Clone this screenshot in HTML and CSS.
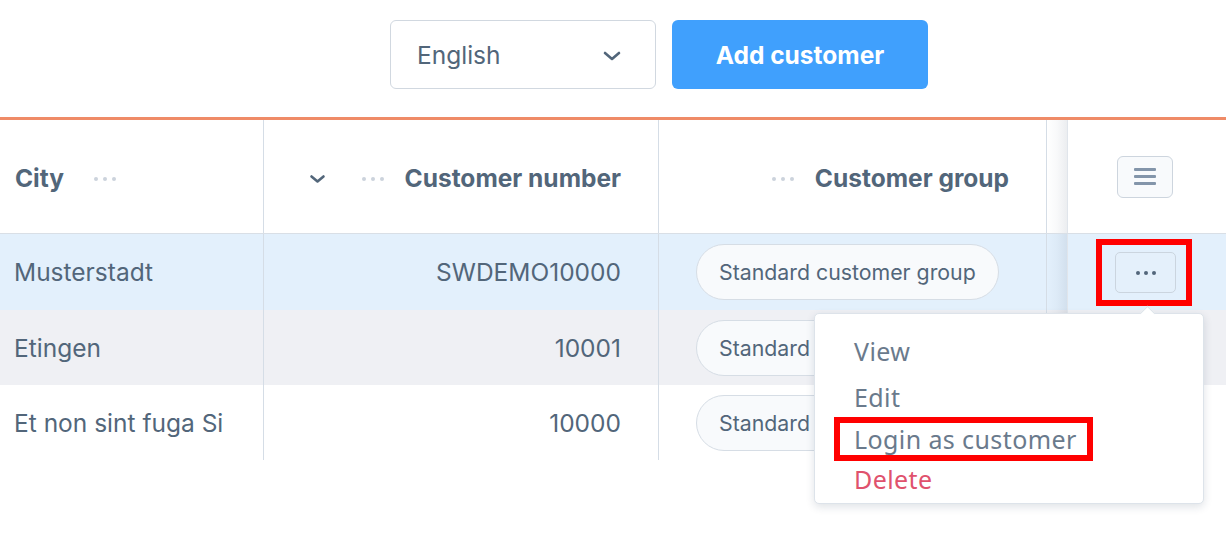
FILE: index.html
```html
<!DOCTYPE html>
<html lang="en">
<head>
<meta charset="utf-8">
<title>Customers</title>
<link rel="stylesheet" href="styles.css">
</head>
<body>
<div class="toolbar">
  <div class="select">
    <span class="select-label">English</span>
    <svg class="select-chevron" width="18" height="10" viewBox="0 0 18 10"><path d="M2 2 L9 8 L16 2" fill="none" stroke="#52667a" stroke-width="2.6" stroke-linecap="round" stroke-linejoin="round"/></svg>
  </div>
  <button class="btn-primary">Add customer</button>
</div>

<div class="grid">
  <div class="row head">
    <div class="cell c-city"><span class="h-label">City</span><span class="h-dots"><i></i><i></i><i></i></span></div>
    <div class="cell c-num">
      <svg class="sort" width="17" height="10" viewBox="0 0 17 10"><path d="M2.5 2.5 L8.5 7.5 L14.5 2.5" fill="none" stroke="#52667a" stroke-width="2.6" stroke-linecap="round" stroke-linejoin="round"/></svg>
      <span class="h-dots"><i></i><i></i><i></i></span><span class="h-label">Customer number</span>
    </div>
    <div class="cell c-group head-right"><span class="h-dots"><i></i><i></i><i></i></span><span class="h-label">Customer group</span></div>
    <div class="spacer"></div>
    <div class="cell c-actions">
      <button class="icon-btn menu-btn"><i></i><i></i><i></i></button>
    </div>
  </div>

  <div class="row r-selected r-first">
    <div class="cell c-city">Musterstadt</div>
    <div class="cell c-num">SWDEMO10000</div>
    <div class="cell c-group"><span class="pill">Standard customer group</span></div>
    <div class="spacer"></div>
    <div class="cell c-actions">
      <span class="mark mark-btn"><button class="icon-btn dots-btn"><i></i><i></i><i></i></button></span>
    </div>
  </div>

  <div class="row r-striped">
    <div class="cell c-city">Etingen</div>
    <div class="cell c-num">10001</div>
    <div class="cell c-group"><span class="pill">Standard customer group</span></div>
    <div class="spacer"></div>
    <div class="cell c-actions"></div>
  </div>

  <div class="row">
    <div class="cell c-city">Et non sint fuga Si</div>
    <div class="cell c-num">10000</div>
    <div class="cell c-group"><span class="pill">Standard customer group</span></div>
    <div class="spacer"></div>
    <div class="cell c-actions"></div>
  </div>

  <div class="context-menu">
    <span class="menu-arrow"></span>
    <div class="menu-item first">View</div>
    <div class="menu-item">Edit</div>
    <div class="menu-item marked"><span class="mark mark-item">Login as customer</span></div>
    <div class="menu-item danger">Delete</div>
  </div>
</div>
</body>
</html>
```

FILE: styles.css
```css
* { box-sizing: border-box; }

body {
  margin: 0;
  background: #ffffff;
  font-family: Inter, "Noto Sans", sans-serif;
  color: #52667a;
  width: 1226px;
  height: 542px;
  overflow: hidden;
}

.toolbar {
  display: flex;
  gap: 16px;
  padding: 20px 0 0 390px;
  height: 89px;
}

.select {
  width: 266px;
  height: 69px;
  border: 1px solid #d1d8e0;
  border-radius: 6px;
  display: flex;
  align-items: center;
  justify-content: space-between;
  padding: 0 34px 0 26px;
  font-size: 24.5px;
  color: #52667a;
}

.select-chevron { margin-top: 2px; }

.btn-primary {
  width: 256px;
  height: 69px;
  border: none;
  border-radius: 6px;
  background: #40a0fd;
  color: #ffffff;
  font-family: Inter, sans-serif;
  font-size: 24.5px;
  font-weight: 700;
  padding: 0;
}

.grid {
  position: relative;
  margin-top: 28px;
  border-top: 3px solid #ef8b67;
}

.row {
  display: grid;
  grid-template-columns: 264px 395px 388px 20px 1fr;
  height: 75px;
  font-size: 24.5px;
}

.row.head {
  height: 114px;
  border-bottom: 1px solid #d9dfe6;
}

.r-first { height: 76px; }
.r-selected { background: #e3f0fc; }
.r-striped { background: #eff0f4; }

.cell {
  display: flex;
  align-items: center;
  border-right: 1px solid #d5dde6;
  min-width: 0;
  white-space: nowrap;
  overflow: hidden;
}

.c-city { padding-left: 14px; }
.c-num { justify-content: flex-end; padding-right: 37px; }
.c-group { padding-left: 37px; }
.head-right { justify-content: flex-end; padding-right: 37px; padding-left: 0; }

.spacer {
  background: linear-gradient(to right, rgba(0,0,0,0) 0%, rgba(40,60,90,0.03) 50%, rgba(40,60,90,0.09) 100%);
}

.c-actions {
  border-right: none;
  border-left: 1px solid #e0e5eb;
  justify-content: center;
  overflow: visible;
}

.head .cell { padding-top: 2px; }
.head .c-city { padding-left: 15px; }

.h-label {
  font-weight: 700;
  font-size: 24.5px;
  color: #52667a;
}

.h-dots {
  display: inline-flex;
  gap: 5px;
  margin-left: 30px;
  margin-top: 2px;
}
.h-dots i {
  width: 4px;
  height: 4px;
  border-radius: 50%;
  background: #ccd3dc;
}
.c-num .h-dots, .c-group .h-dots { margin-left: 0; margin-right: 21px; }

.sort { margin-right: 36px; margin-top: 3px; }

.icon-btn {
  display: flex;
  align-items: center;
  justify-content: center;
  padding: 0;
  cursor: pointer;
}

.menu-btn {
  width: 56px;
  height: 42px;
  flex-direction: column;
  gap: 4px;
  background: #f8fafc;
  border: 1px solid #cdd5de;
  border-radius: 6px;
  margin-left: -4px;
  margin-top: -2px;
}
.menu-btn i {
  width: 22px;
  height: 3px;
  background: #8395aa;
  border-radius: 1px;
}

.dots-btn {
  width: 61px;
  height: 41px;
  gap: 4px;
  background: #e4f0fb;
  border: 1px solid #cbd5df;
  border-radius: 5px;
}
.dots-btn i {
  width: 4px;
  height: 4px;
  border-radius: 50%;
  background: #52667a;
}

.mark {
  border: 6px solid #ff0000;
}

.mark-btn {
  display: inline-flex;
  padding: 7px 10px 7px 13px;
  margin-left: -6px;
  margin-top: 1px;
}

.pill {
  display: inline-flex;
  align-items: center;
  height: 56px;
  padding: 0 22px;
  border: 1px solid #d6dde5;
  border-radius: 28px;
  background: #f8fafc;
  font-size: 21.3px;
  color: #52667a;
}

.context-menu {
  position: absolute;
  left: 814px;
  top: 193px;
  width: 390px;
  height: 191px;
  background: #ffffff;
  border: 1px solid #dde3ea;
  border-radius: 5px;
  box-shadow: 0 3px 8px rgba(30, 50, 80, 0.14);
  padding-top: 16px;
  font-family: "Noto Sans", "Open Sans", sans-serif;
  font-size: 25px;
  letter-spacing: 0.4px;
  color: #6a7a8c;
}

.menu-arrow {
  position: absolute;
  top: -6px;
  left: 327px;
  width: 11px;
  height: 11px;
  background: #ffffff;
  border-top: 1px solid #dde3ea;
  border-left: 1px solid #dde3ea;
  transform: rotate(45deg);
}

.menu-item {
  height: 42px;
  line-height: 42px;
  padding-left: 39px;
}
.menu-item.first { margin-bottom: 4px; }

.menu-item.marked { padding-left: 19px; }

.mark-item {
  display: inline-block;
  height: 44px;
  line-height: 32px;
  padding: 0 10px 0 14px;
  margin-top: -3px;
}

.menu-item.danger { color: #e0526d; line-height: 38px; }
```
